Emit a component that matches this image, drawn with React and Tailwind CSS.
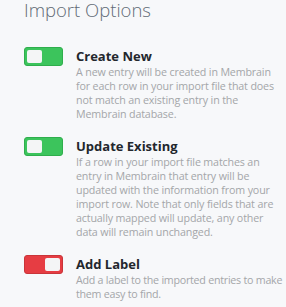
const OPTIONS = [
  {
    title: "Create New",
    on: true,
    box: "w-[209px] tracking-[-0.15px]",
    text: "A new entry will be created in Membrain for each row in your import file that does not match an existing entry in the Membrain database.",
  },
  {
    title: "Update Existing",
    on: true,
    box: "w-[209px] tracking-[-0.15px]",
    text: "If a row in your import file matches an entry in Membrain that entry will be updated with the information from your import row. Note that only fields that are actually mapped will update, any other data will remain unchanged.",
  },
  {
    title: "Add Label",
    on: false,
    box: "w-[210px] tracking-[-0.25px]",
    text: "Add a label to the imported entries to make them easy to find.",
  },
];

function Toggle({ on }) {
  return (
    <div
      className={
        on
          ? "flex h-[19px] w-[39px] shrink-0 items-center justify-start rounded-[3px] border border-[#2fae4c] bg-[#3cc45c] p-[2px]"
          : "flex h-[19px] w-[39px] shrink-0 items-center justify-end rounded-[3px] border border-[#c9353a] bg-[#e63d43] p-[2px]"
      }
    >
      <div className="h-full w-[15px] rounded-[2px] bg-[#f4f5f6]" />
    </div>
  );
}

export default function App() {
  return (
    <div
      className="min-h-[307px] w-[286px] overflow-hidden bg-[#f7f8fa] pl-6"
      style={{ fontFamily: '"Open Sans", sans-serif' }}
    >
      <h1 className="text-[18.5px] font-light leading-[20px] text-[#626b76]">Import Options</h1>
      <div className="mt-[27px] flex flex-col gap-4">
        {OPTIONS.map((o) => (
          <div key={o.title} className="flex gap-[13px]">
            <Toggle on={o.on} />
            <div className={"shrink-0 " + o.box}>
              <p className="text-[13px] font-bold leading-[18px] tracking-normal text-[#23272d]">{o.title}</p>
              <p className="text-[10.7px] leading-[14px] text-[#a4a6a9]">{o.text}</p>
            </div>
          </div>
        ))}
      </div>
    </div>
  );
}
